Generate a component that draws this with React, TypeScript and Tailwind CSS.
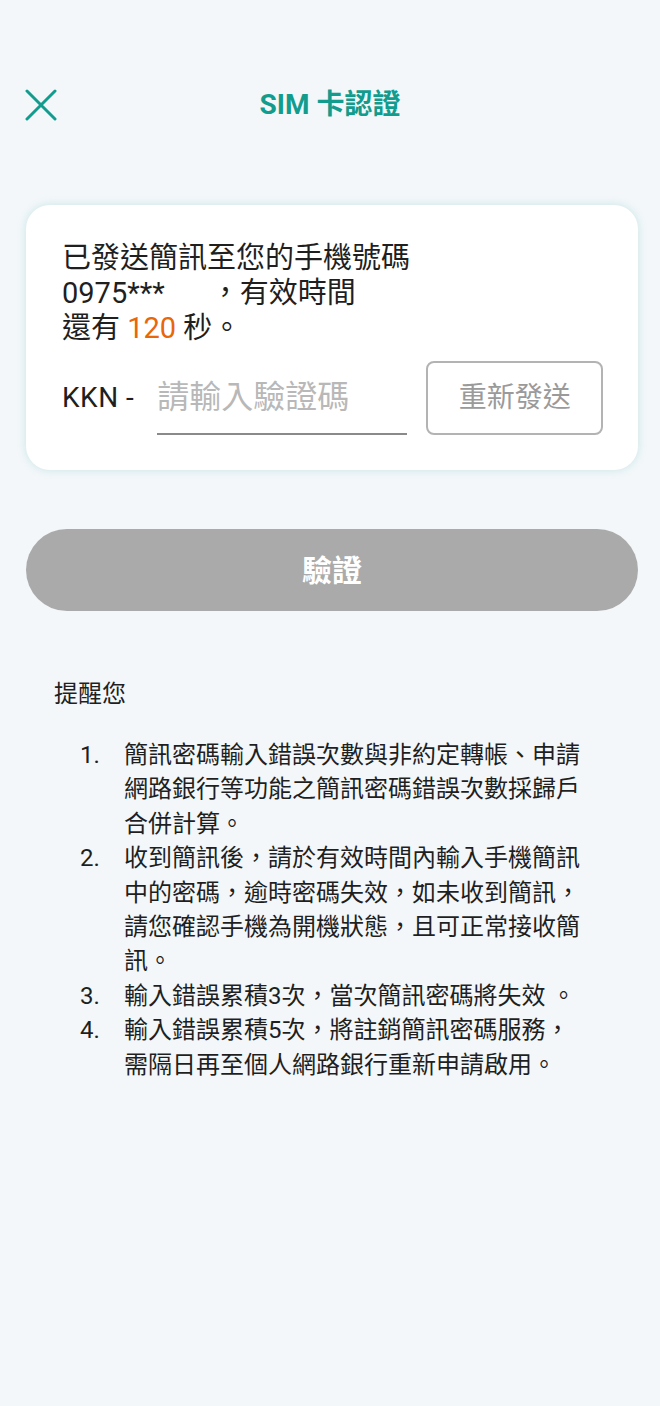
import React from 'react'

const notes: string[] = [
  '簡訊密碼輸入錯誤次數與非約定轉帳、申請網路銀行等功能之簡訊密碼錯誤次數採歸戶合併計算。',
  '收到簡訊後，請於有效時間內輸入手機簡訊中的密碼，逾時密碼失效，如未收到簡訊，請您確認手機為開機狀態，且可正常接收簡訊。',
  '輸入錯誤累積3次，當次簡訊密碼將失效 。',
  '輸入錯誤累積5次，將註銷簡訊密碼服務，需隔日再至個人網路銀行重新申請啟用。',
]

const CloseIcon: React.FC = () => (
  <svg width="32" height="32" viewBox="0 0 32 32" fill="none">
    <path d="M2 2 L30 30 M30 2 L2 30" stroke="#129c8e" strokeWidth="3" strokeLinecap="round" />
  </svg>
)

const App: React.FC = () => {
  return (
    <div className="min-h-[1406px] w-full bg-[#f3f7fa] pt-[75px] font-['Roboto','Noto_Sans_CJK_TC',sans-serif] text-[#1f1f1f]">
      {/* header */}
      <header className="relative flex h-[60px] items-center justify-center">
        <button className="absolute left-[25px] top-[14px]">
          <CloseIcon />
        </button>
        <h1 className="text-[28px] font-bold text-[#129c8e]">SIM 卡認證</h1>
      </header>

      <main className="pl-[26px] pr-[22px]">
        {/* sms card */}
        <section className="mt-[70px] rounded-[24px] bg-white px-[36px] pb-[35px] pt-[36px] shadow-[0_0_10px_rgba(18,156,142,0.18)]">
          <p className="text-[29px] leading-[35px]">
            已發送簡訊至您的手機號碼
            <br />
            0975***<span className="inline-block w-[46px]" />，有效時間
            <br />
            還有 <span className="text-[#e8660c]">120</span> 秒。
          </p>

          <div className="mt-[15px] flex h-[74px] items-center">
            <span className="shrink-0 whitespace-nowrap text-[28px] tracking-[0.5px]">KKN -</span>
            <div className="ml-[23px] flex h-full w-[250px] shrink-0 items-center border-b-2 border-[#8a8a8a]">
              <input
                className="w-full bg-transparent text-[32px] outline-none placeholder:text-[#b8b8b8]"
                placeholder="請輸入驗證碼"
              />
            </div>
            <button className="ml-[19px] flex h-full w-[177px] shrink-0 items-center justify-center rounded-[8px] border-2 border-[#b3b3b3] text-[28px] text-[#9a9a9a]">
              重新發送
            </button>
          </div>
        </section>

        <button className="mt-[59px] flex h-[82px] w-full items-center justify-center rounded-full bg-[#aaaaaa] text-[30px] font-bold text-white">
          驗證
        </button>

        {/* notes */}
        <section className="mt-[66px] pl-[28px]">
          <h2 className="text-[24px] leading-[34px]">提醒您</h2>
          <ol className="mt-[27px] pl-[26px] text-[24px] leading-[34.4px] text-[#1f1f1f]">
            {notes.map((note, i) => (
              <li key={i} className="flex">
                <span className="w-[44px] shrink-0">{i + 1}.</span>
                <span className="w-[458px]">{note}</span>
              </li>
            ))}
          </ol>
        </section>
      </main>
    </div>
  )
}

export default App
